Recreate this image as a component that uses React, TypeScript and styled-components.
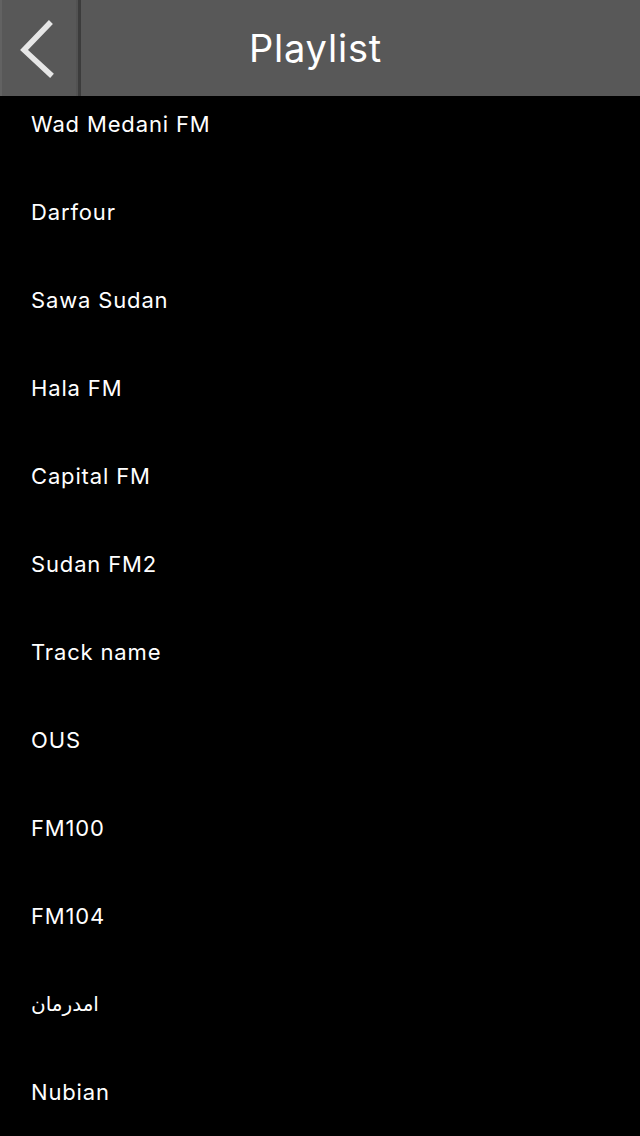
import * as React from 'react';
import styled, {createGlobalStyle} from 'styled-components';

const GlobalStyle = createGlobalStyle`
  html, body {
    margin: 0;
    padding: 0;
    background: #000;
  }
  body {
    font-family: Inter, "Liberation Sans", "DejaVu Sans", sans-serif;
    overflow: hidden;
  }
`;

const Page = styled.div`
  width: 640px;
  height: 1136px;
  background: #000;
  display: flex;
  flex-direction: column;
  overflow: hidden;
`;

const NavBar = styled.div`
  height: 96px;
  flex: none;
  display: flex;
  background: #585858;
`;

const BackButton = styled.button`
  width: 81px;
  height: 96px;
  flex: none;
  border: 0;
  padding: 0;
  margin: 0;
  background: #585858;
  border-left: 2px solid #626262;
  box-shadow: inset -3px 0 0 #3c3c3c, inset -5px 0 0 #525252;
  display: flex;
  align-items: center;
  justify-content: flex-start;
  cursor: pointer;
`;

const Title = styled.h1`
  flex: 1;
  margin: 0;
  padding-right: 90px;
  text-align: center;
  line-height: 96px;
  font-size: 38px;
  font-weight: 400;
  color: #fff;
  letter-spacing: 0.8px;
`;

const List = styled.ul`
  list-style: none;
  margin: 0;
  padding: 0;
`;

const Row = styled.li<{$rtl?: boolean}>`
  height: 88px;
  box-sizing: border-box;
  padding: 12px 31px 0;
  line-height: 32px;
  font-size: ${p => (p.$rtl ? '20px' : '22px')};
  color: #fff;
  letter-spacing: ${p => (p.$rtl ? '0' : '0.85px')};
`;

const stations = [
  'Wad Medani FM',
  'Darfour',
  'Sawa Sudan',
  'Hala FM',
  'Capital FM',
  'Sudan FM2',
  'Track name',
  'OUS',
  'FM100',
  'FM104',
  'امدرمان',
  'Nubian',
];

function Chevron() {
  return (
    <svg width="60" height="96" viewBox="0 0 60 96">
      <path d="M47 24 L22 50 L48 74" fill="none" stroke="#e6e6e6" strokeWidth="5.5" strokeLinecap="square"/>
    </svg>
  );
}

function App() {
  return (
    <Page>
      <GlobalStyle/>
      <NavBar>
        <BackButton aria-label="Back">
          <Chevron/>
        </BackButton>
        <Title>Playlist</Title>
      </NavBar>
      <List>
        {stations.map((name, index) => (
          <Row key={index} $rtl={/[\u0600-\u06FF]/.test(name)}>{name}</Row>
        ))}
      </List>
    </Page>
  );
}

export default App;
